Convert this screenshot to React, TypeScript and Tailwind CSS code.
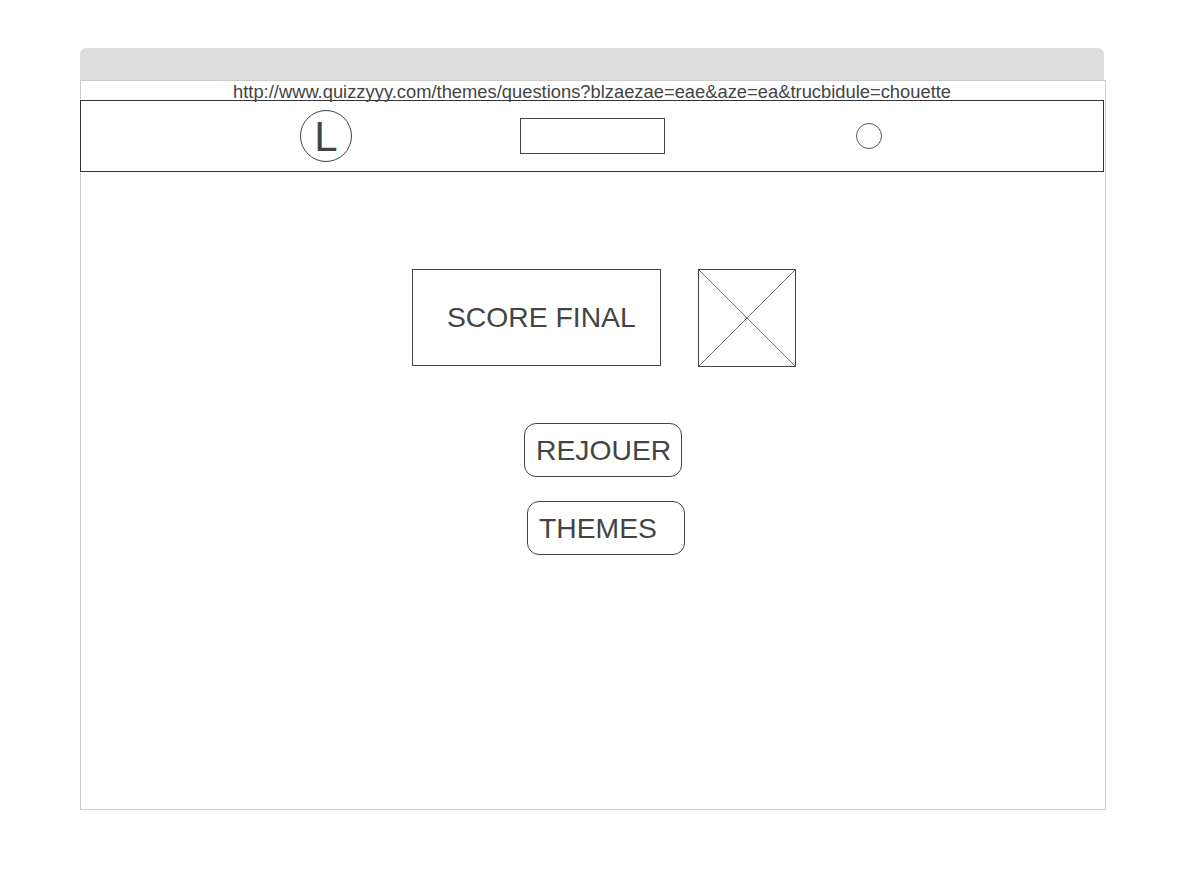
const App = () => {
  return (
    <div className="min-h-[888px] w-[1184px] bg-white pt-[48px] pl-[80px] font-['Liberation_Sans',Arial,sans-serif] text-[#444]">
      {/* browser top bar */}
      <div className="w-[1024px] h-[32px] rounded-t-[6px] bg-[#dddddd]" />

      {/* browser window */}
      <div className="w-[1026px] h-[730px] border border-[#cccccc]">
        <div className="h-[19px] pl-[152px] pt-[1px] text-[18.35px] leading-[19px] whitespace-nowrap">
          http://www.quizzyyy.com/themes/questions?blzaezae=eae&amp;aze=ea&amp;trucbidule=chouette
        </div>

        {/* header */}
        <div className="-ml-px w-[1024px] h-[72px] border border-[#333] flex items-center">
          <div className="ml-[219px] w-[52px] h-[52px] rounded-full border border-[#444] flex items-center justify-center text-[42px] leading-none pt-[2px]">L</div>
          <div className="ml-[168px] w-[145px] h-[36px] border border-[#444]" />
          <div className="ml-[191px] w-[26px] h-[26px] rounded-full border border-[#555]" />
        </div>

        {/* score */}
        <div className="mt-[97px] ml-[331px] flex items-start">
          <div className="w-[249px] h-[97px] border border-[#444] flex items-center pl-[34px] text-[28.3px] leading-none">SCORE FINAL</div>
          <div className="ml-[37px] w-[98px] h-[98px] border border-[#444]">
            <svg width="96" height="96" viewBox="0 0 96 96" className="block">
              <line x1="0" y1="0" x2="96" y2="96" stroke="#444" strokeWidth="0.8" />
              <line x1="96" y1="0" x2="0" y2="96" stroke="#444" strokeWidth="0.8" />
            </svg>
          </div>
        </div>

        {/* buttons */}
        <div className="mt-[56px] ml-[443px] w-[158px] h-[54px] rounded-[12px] border border-[#444] flex items-center pl-[11px] pt-[1px] text-[28.3px] leading-none">REJOUER</div>
        <div className="mt-[24px] ml-[446px] w-[158px] h-[54px] rounded-[12px] border border-[#444] flex items-center pl-[11px] pt-[1px] text-[28.3px] leading-none">THEMES</div>
      </div>
    </div>
  );
};

export default App;
